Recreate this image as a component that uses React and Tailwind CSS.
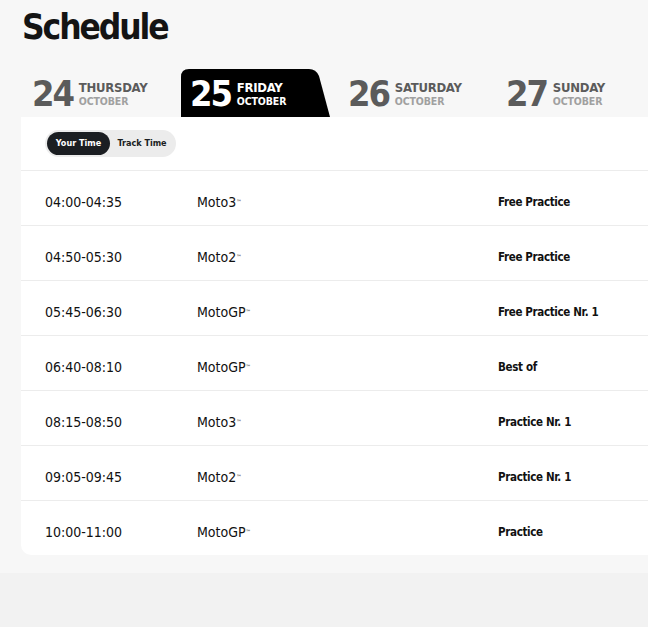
import React from "react";

const font = { fontFamily: '"DejaVu Sans Condensed", "DejaVu Sans", sans-serif' };

const days = [
  { n: "24", d: "THURSDAY" },
  { n: "25", d: "FRIDAY", active: true },
  { n: "26", d: "SATURDAY" },
  { n: "27", d: "SUNDAY" },
];

const rows = [
  ["04:00-04:35", "Moto3", "Free Practice"],
  ["04:50-05:30", "Moto2", "Free Practice"],
  ["05:45-06:30", "MotoGP", "Free Practice Nr. 1"],
  ["06:40-08:10", "MotoGP", "Best of"],
  ["08:15-08:50", "Moto3", "Practice Nr. 1"],
  ["09:05-09:45", "Moto2", "Practice Nr. 1"],
  ["10:00-11:00", "MotoGP", "Practice"],
];

function Tab({ n, d, active }) {
  return (
    <div className="relative shrink-0 w-[158px] h-[48px] flex items-center pl-[9px] gap-[6px]">
      {active && (
        <svg className="absolute left-0 top-0" width="150" height="48" viewBox="0 0 150 48">
          <path d="M0 8 Q0 0 8 0 L128 0 Q135 0 138 7 L149 48 L0 48 Z" fill="#000" />
        </svg>
      )}
      <span
        className={`relative text-[36px] font-bold leading-none tracking-[-0.06em] mt-[2px] ${active ? "text-white" : "text-[#5b5b5b]"}`}
      >
        {n}
      </span>
      <div className="relative flex flex-col leading-none mt-[1px]">
        <span className={`text-[13px] font-bold tracking-[-0.02em] ${active ? "text-white" : "text-[#5b5b5b]"}`}>{d}</span>
        <span className={`text-[10.5px] font-bold mt-[2px] tracking-[-0.01em] ${active ? "text-white" : "text-[#a0a0a0]"}`}>OCTOBER</span>
      </div>
    </div>
  );
}

export default function App() {
  return (
    <div style={font} className="w-[648px] h-[627px] bg-[#f2f2f2] overflow-hidden">
      <div className="bg-[#f7f7f7] pl-[21px] pb-[18px]">
        <h1 className="text-[35px] font-bold text-[#141414] leading-none pt-[10px] tracking-[-0.06em] pl-[1px]">
          Schedule
        </h1>
        <div className="flex pl-[2px] mt-[24px]">
          {days.map((x) => (
            <Tab key={x.n} {...x} />
          ))}
        </div>
        <div className="bg-white rounded-bl-[10px]">
          <div className="h-[54px] flex items-center pl-[24px] border-b border-[#ececec]">
            <div className="flex items-center bg-[#ececec] rounded-full h-[27px] p-[2px] w-[131px]">
              <div className="bg-[#1b1e22] text-white rounded-full h-[23px] w-[63px] flex items-center justify-center text-[9px] font-bold">
                Your Time
              </div>
              <div className="text-[#1b1e22] text-[9px] font-bold flex-1 text-center">Track Time</div>
            </div>
          </div>
          {rows.map((r, i) => (
            <div
              key={i}
              className={`flex items-center text-[#111] pt-[9px] ${i < rows.length - 1 ? "h-[55px] border-b border-[#ececec]" : "h-[54px]"}`}
            >
              <div className="w-[176px] pl-[24px] text-[14px]">{r[0]}</div>
              <div className="w-[301px] text-[14px]">
                {r[1]}
                <sup className="text-[6px] relative top-[-3px]">™</sup>
              </div>
              <div className="text-[11.5px] font-bold tracking-[-0.03em]">{r[2]}</div>
            </div>
          ))}
        </div>
      </div>
    </div>
  );
}
